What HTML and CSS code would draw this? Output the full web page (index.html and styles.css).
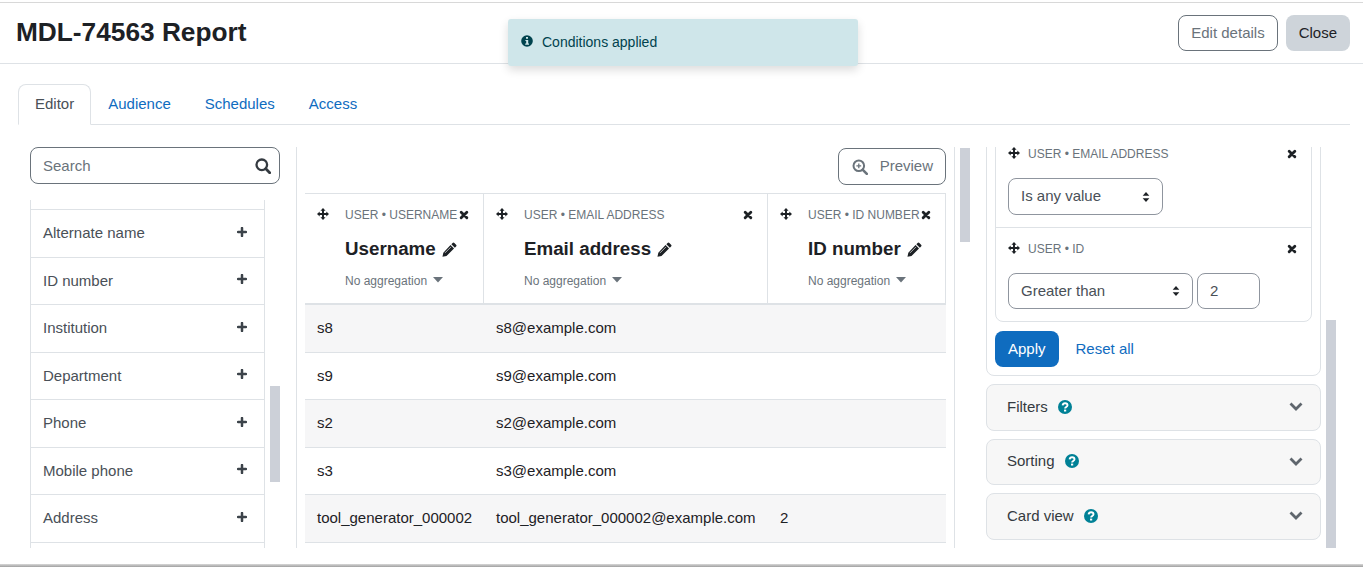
FILE: index.html
```html
<!DOCTYPE html>
<html lang="en">
<head>
<meta charset="utf-8">
<title>MDL-74563 Report</title>
<link rel="stylesheet" href="styles.css">
</head>
<body>
<svg class="defs" width="0" height="0" aria-hidden="true">
  <symbol id="i-move" viewBox="0 0 16 16"><path d="M8 0l3.4 3.6H9.3V6.7h3.1V4.6L16 8l-3.6 3.4V9.3H9.3v3.1h2.1L8 16l-3.4-3.6h2.1V9.3H3.6v2.1L0 8l3.6-3.4v2.1h3.1V3.6H4.6z"/></symbol>
  <symbol id="i-x" viewBox="0 0 12 12"><path d="M2.6 2.6l6.8 6.8M9.4 2.6l-6.8 6.8" fill="none" stroke="currentColor" stroke-width="3.4" stroke-linecap="round"/></symbol>
  <symbol id="i-plus" viewBox="0 0 12 12"><path d="M6 1.2v9.6M1.2 6h9.6" fill="none" stroke="currentColor" stroke-width="3" stroke-linecap="round"/></symbol>
  <symbol id="i-pencil" viewBox="0 0 16 16"><path d="M11.3 1a1.3 1.3 0 0 1 1.9 0l1.8 1.8a1.3 1.3 0 0 1 0 1.9l-1.3 1.3L10 2.3zM9.1 3.2l3.7 3.7-8 8-4.3.9.9-4.4z"/><path d="M3.2 11.6l6.4-6.4" stroke="#fff" stroke-width=".7"/></symbol>
  <symbol id="i-caret" viewBox="0 0 10 6"><path d="M0 0h10L5 5.5z"/></symbol>
  <symbol id="i-sort" viewBox="0 0 8 12"><path d="M4 0l4 4.6H0zM4 12L0 7.4h8z"/></symbol>
  <symbol id="i-help" viewBox="0 0 14 14"><circle cx="7" cy="7" r="7" fill="#008196"/><path d="M4.6 5.4C4.8 4 5.8 3.3 7.1 3.3c1.4 0 2.4.9 2.4 2 0 1.8-2.4 1.7-2.4 3.3" fill="none" stroke="#fff" stroke-width="1.9"/><path d="M6 9.6h2.2v1.9H6z" fill="#fff"/></symbol>
  <symbol id="i-chev" viewBox="0 0 14 9"><path d="M1.5 1.5L7 7l5.5-5.5" fill="none" stroke="currentColor" stroke-width="2.8"/></symbol>
</svg>

<div class="toast">
  <svg class="toast-icon" viewBox="0 0 12 12"><circle cx="6" cy="6" r="5.8" fill="#00434e"/><path d="M5 2h2v1.7H5zM4.4 4.9h2.8v3.7h.8v1.2H4.2V8.6h1V6.1h-.8z" fill="#cfe6ea"/></svg>
  <span>Conditions applied</span>
</div>

<header class="page-header">
  <h1 class="title">MDL-74563 Report</h1>
  <div class="actions">
    <a class="btn btn-outline">Edit details</a>
    <a class="btn btn-grey">Close</a>
  </div>
</header>

<nav class="tabs">
  <a class="tab tab-active">Editor</a>
  <a class="tab">Audience</a>
  <a class="tab">Schedules</a>
  <a class="tab">Access</a>
</nav>

<main class="workspace">
  <section class="col-left">
    <div class="search">
      <span>Search</span>
      <svg class="search-icon" viewBox="0 0 16 16"><circle cx="6.8" cy="6.8" r="5.3" fill="none" stroke="currentColor" stroke-width="2.3"/><path d="M10.8 10.8l3.9 3.9" stroke="currentColor" stroke-width="2.8" stroke-linecap="round"/></svg>
    </div>
    <ul class="fields">
      <li class="field field-clip"></li>
      <li class="field">Alternate name<svg class="ic-plus"><use href="#i-plus"/></svg></li>
      <li class="field">ID number<svg class="ic-plus"><use href="#i-plus"/></svg></li>
      <li class="field">Institution<svg class="ic-plus"><use href="#i-plus"/></svg></li>
      <li class="field">Department<svg class="ic-plus"><use href="#i-plus"/></svg></li>
      <li class="field">Phone<svg class="ic-plus"><use href="#i-plus"/></svg></li>
      <li class="field">Mobile phone<svg class="ic-plus"><use href="#i-plus"/></svg></li>
      <li class="field">Address<svg class="ic-plus"><use href="#i-plus"/></svg></li>
      <li class="field"></li>
    </ul>
    <div class="thumb thumb-left"></div>
  </section>

  <section class="col-mid">
    <div class="preview-row">
      <a class="btn btn-outline btn-preview">
        <svg class="preview-icon" viewBox="0 0 16 16"><circle cx="6.8" cy="6.8" r="5.3" fill="none" stroke="currentColor" stroke-width="2"/><path d="M10.8 10.8l4 4" stroke="currentColor" stroke-width="2.6" stroke-linecap="round"/><path d="M6.8 4.4v4.8M4.4 6.8h4.8" stroke="currentColor" stroke-width="1.3"/></svg>
        Preview
      </a>
    </div>
    <table class="report">
      <thead>
        <tr>
          <th>
            <div class="th-top"><svg class="ic-move"><use href="#i-move"/></svg><span class="th-label">USER • USERNAME</span><svg class="ic-x"><use href="#i-x"/></svg></div>
            <div class="th-title">Username<svg class="ic-pencil"><use href="#i-pencil"/></svg></div>
            <div class="th-agg">No aggregation<svg class="ic-caret"><use href="#i-caret"/></svg></div>
          </th>
          <th>
            <div class="th-top"><svg class="ic-move"><use href="#i-move"/></svg><span class="th-label">USER • EMAIL ADDRESS</span><svg class="ic-x"><use href="#i-x"/></svg></div>
            <div class="th-title">Email address<svg class="ic-pencil"><use href="#i-pencil"/></svg></div>
            <div class="th-agg">No aggregation<svg class="ic-caret"><use href="#i-caret"/></svg></div>
          </th>
          <th>
            <div class="th-top"><svg class="ic-move"><use href="#i-move"/></svg><span class="th-label">USER • ID NUMBER</span><svg class="ic-x"><use href="#i-x"/></svg></div>
            <div class="th-title">ID number<svg class="ic-pencil"><use href="#i-pencil"/></svg></div>
            <div class="th-agg">No aggregation<svg class="ic-caret"><use href="#i-caret"/></svg></div>
          </th>
        </tr>
      </thead>
      <tbody>
        <tr class="odd"><td>s8</td><td>s8@example.com</td><td></td></tr>
        <tr><td>s9</td><td>s9@example.com</td><td></td></tr>
        <tr class="odd"><td>s2</td><td>s2@example.com</td><td></td></tr>
        <tr><td>s3</td><td>s3@example.com</td><td></td></tr>
        <tr class="odd"><td>tool_generator_000002</td><td>tool_generator_000002@example.com</td><td>2</td></tr>
      </tbody>
    </table>
  </section>

  <section class="col-right">
    <div class="thumb thumb-mid"></div>
    <div class="conditions">
      <div class="cond-list">
        <div class="cond">
          <div class="cond-head"><svg class="ic-move"><use href="#i-move"/></svg><span class="th-label">USER • EMAIL ADDRESS</span><svg class="ic-x"><use href="#i-x"/></svg></div>
          <div class="cond-controls">
            <div class="select select-any">Is any value<svg class="ic-sort"><use href="#i-sort"/></svg></div>
          </div>
        </div>
        <div class="cond">
          <div class="cond-head"><svg class="ic-move"><use href="#i-move"/></svg><span class="th-label">USER • ID</span><svg class="ic-x"><use href="#i-x"/></svg></div>
          <div class="cond-controls">
            <div class="select select-gt">Greater than<svg class="ic-sort"><use href="#i-sort"/></svg></div>
            <div class="select num">2</div>
          </div>
        </div>
      </div>
      <div class="cond-actions">
        <a class="btn btn-primary">Apply</a>
        <a class="reset">Reset all</a>
      </div>
    </div>
    <div class="acc">Filters<svg class="ic-help"><use href="#i-help"/></svg><svg class="ic-chev"><use href="#i-chev"/></svg></div>
    <div class="acc">Sorting<svg class="ic-help"><use href="#i-help"/></svg><svg class="ic-chev"><use href="#i-chev"/></svg></div>
    <div class="acc">Card view<svg class="ic-help"><use href="#i-help"/></svg><svg class="ic-chev"><use href="#i-chev"/></svg></div>
    <div class="thumb thumb-right"></div>
  </section>
</main>
<div class="bottom-bar"></div>
</body>
</html>
```
FILE: styles.css
```css
* { box-sizing: border-box; }
html, body { margin: 0; height: 567px; overflow: hidden; }
body {
  position: relative;
  display: flex;
  flex-direction: column;
  background: #fff;
  color: #1d2125;
  font: 15px/22.5px "Liberation Sans", Arial, sans-serif;
  padding-top: 2px;
}
.defs { position: absolute; }
a { text-decoration: none; }
ul { list-style: none; margin: 0; padding: 0; }

.toast {
  position: absolute;
  left: 508px;
  top: 19px;
  width: 350px;
  height: 47px;
  display: flex;
  align-items: center;
  gap: 9px;
  padding: 0 13px 1px 13px;
  background: #cfe6ea;
  color: #00434e;
  font-size: 14px;
  border-radius: 3px;
  box-shadow: 0 4px 10px rgba(0,0,0,.14);
  z-index: 5;
}
.toast-icon { width: 12px; height: 12px; margin-top: -2px; }

.page-header {
  height: 62px;
  flex: none;
  border-top: 1px solid #d8d8d8;
  border-bottom: 1px solid #dee2e6;
  display: flex;
  align-items: center;
  justify-content: space-between;
  padding: 0 13px 0 16px;
}
.title { margin: 0 0 2px; font-size: 26.25px; line-height: 32px; font-weight: 700; }
.actions { display: flex; gap: 8px; }

.btn {
  display: inline-flex;
  align-items: center;
  height: 36px;
  padding: 0 12px;
  border-radius: 8px;
  border: 1px solid transparent;
}
.btn-outline { border-color: #6a737b; color: #6a737b; }
.btn-grey { background: #ced4da; color: #1d2125; }
.btn-primary { background: #0f6cbf; color: #fff; height: 36px; }

.tabs {
  flex: none;
  display: flex;
  margin: 20px 13px 0 18px;
  height: 41px;
  border-bottom: 1px solid #dee2e6;
}
.tab {
  padding: 9px 17px 0;
  color: #0f6cbf;
}
.tab-active {
  height: 41px;
  padding: 8px 16px 0;
  color: #495057;
  border: 1px solid #dee2e6;
  border-bottom-color: #fff;
  border-radius: 8px 8px 0 0;
}

.workspace {
  flex: none;
  display: flex;
  height: 401px;
  margin: 22px 0 0 30px;
}
.thumb { position: absolute; width: 10px; background: #ccd0d8; }

.col-left {
  position: relative;
  width: 267px;
  flex: none;
  padding-right: 16px;
  border-right: 1px solid #dee2e6;
  overflow: hidden;
}
.search {
  height: 37px;
  display: flex;
  align-items: center;
  justify-content: space-between;
  padding: 1px 8px 0 12px;
  border: 1px solid #6a737b;
  border-radius: 8px;
  color: #6a737b;
}
.search-icon { width: 16px; height: 16px; color: #343a40; margin-top: -1px; }
.fields {
  width: 235px;
  margin-top: 16px;
  border-left: 1px solid #dee2e6;
  border-right: 1px solid #dee2e6;
}
.field {
  height: 47.5px;
  display: flex;
  align-items: center;
  justify-content: space-between;
  padding: 0 17px 0 12px;
  border-bottom: 1px solid #dee2e6;
  color: #495057;
}
.field-clip { height: 10px; }
.ic-plus { width: 10px; height: 10px; color: #3c434a; margin-top: -3px; }
.thumb-left { left: 240px; top: 239px; height: 96px; }

.col-mid {
  position: relative;
  width: 658px;
  flex: none;
  padding: 1px 8px 0;
  border-right: 1px solid #dee2e6;
  overflow: hidden;
}
.preview-row { display: flex; justify-content: flex-end; height: 37px; }
.btn-preview { height: 37px; padding: 0 12px 0 13px; }
.preview-icon { width: 16px; height: 16px; margin-right: 12px; }
.report {
  width: 641px;
  margin-top: 8px;
  table-layout: fixed;
  border-collapse: separate;
  border-spacing: 0;
  border-top: 1px solid #dee2e6;
}
.report th {
  padding: 0 14px 0 12px;
  height: 111px;
  vertical-align: top;
  font-weight: 400;
  text-align: left;
  border-right: 1px solid #dee2e6;
  border-bottom: 2px solid #dee2e6;
}
.report th:nth-child(1) { width: 179px; }
.report th:nth-child(2) { width: 284px; }
.report th:nth-child(3) { width: 178px; }
.report td {
  height: 47.5px;
  padding: 0 12px;
  border-bottom: 1px solid #dee2e6;
  white-space: nowrap;
}
.odd td { background: #f6f6f7; }
.th-top {
  display: flex;
  align-items: center;
  height: 14px;
  margin-top: 14px;
}
.th-label { font-size: 12px; line-height: 14px; color: #6a737b; white-space: nowrap; }
.ic-move { width: 12px; height: 12px; margin-right: 16px; flex: none; margin-top: -2px; fill: #1d2125; }
.ic-x { width: 10px; height: 10px; margin-left: auto; flex: none; color: #1d2125; }
.th-title {
  display: flex;
  align-items: center;
  margin: 16px 0 0 28px;
  height: 22px;
  font-size: 18.75px;
  font-weight: 700;
  white-space: nowrap;
}
.ic-pencil { width: 15px; height: 15px; margin-left: 6px; fill: #1d2125; }
.th-agg {
  display: flex;
  align-items: center;
  margin: 11px 0 0 28px;
  height: 20px;
  font-size: 12px;
  color: #6a737b;
  white-space: nowrap;
}
.ic-caret { width: 10px; height: 6px; margin: -3px 0 0 6px; fill: #6a737b; }

.col-right { position: relative; width: 408px; flex: none; padding: 0 0 0 31px; overflow: hidden; }
.thumb-mid { left: 5px; top: 1px; height: 94px; }
.conditions {
  width: 335px;
  margin-top: -24px;
  padding: 8px;
  border: 1px solid #dee2e6;
  border-radius: 8px;
}
.cond-list { border: 1px solid #dee2e6; border-radius: 8px; height: 190px; }
.cond { height: 94px; padding: 14px 14px 0 12px; }
.cond + .cond { height: 94px; border-top: 1px solid #dee2e6; }
.cond-head { display: flex; align-items: center; height: 14px; }
.cond-head .ic-move { margin-right: 8px; }
.cond-controls { display: flex; gap: 4px; margin-top: 17px; }
.select {
  display: flex;
  align-items: center;
  justify-content: space-between;
  height: 37px;
  padding: 0 12px;
  border: 1px solid #8f959e;
  border-radius: 8px;
  color: #495057;
}
.select-any { width: 155px; }
.select-gt { width: 185px; height: 36px; }
.num { width: 63px; height: 36px; }
.ic-sort { width: 8px; height: 10px; fill: #1d2125; }
.cond-actions { display: flex; align-items: center; margin-top: 9px; }
.reset { margin-left: 17px; color: #0f6cbf; }

.acc {
  display: flex;
  align-items: center;
  width: 335px;
  height: 46.5px;
  margin-top: 8px;
  padding: 0 17px 1px 20px;
  background: #f7f7f7;
  border: 1px solid #dee2e6;
  border-radius: 8px;
  color: #343a40;
}
.ic-help { width: 14px; height: 14px; margin-left: 10px; }
.ic-chev { width: 14px; height: 9px; margin-left: auto; color: #5f666d; }
.thumb-right { left: 371px; top: 173px; height: 228px; }

.bottom-bar {
  position: absolute;
  left: 0; right: 0; bottom: 0;
  height: 3px;
  background: linear-gradient(#d8d8d8, #a0a0a0);
}
```
